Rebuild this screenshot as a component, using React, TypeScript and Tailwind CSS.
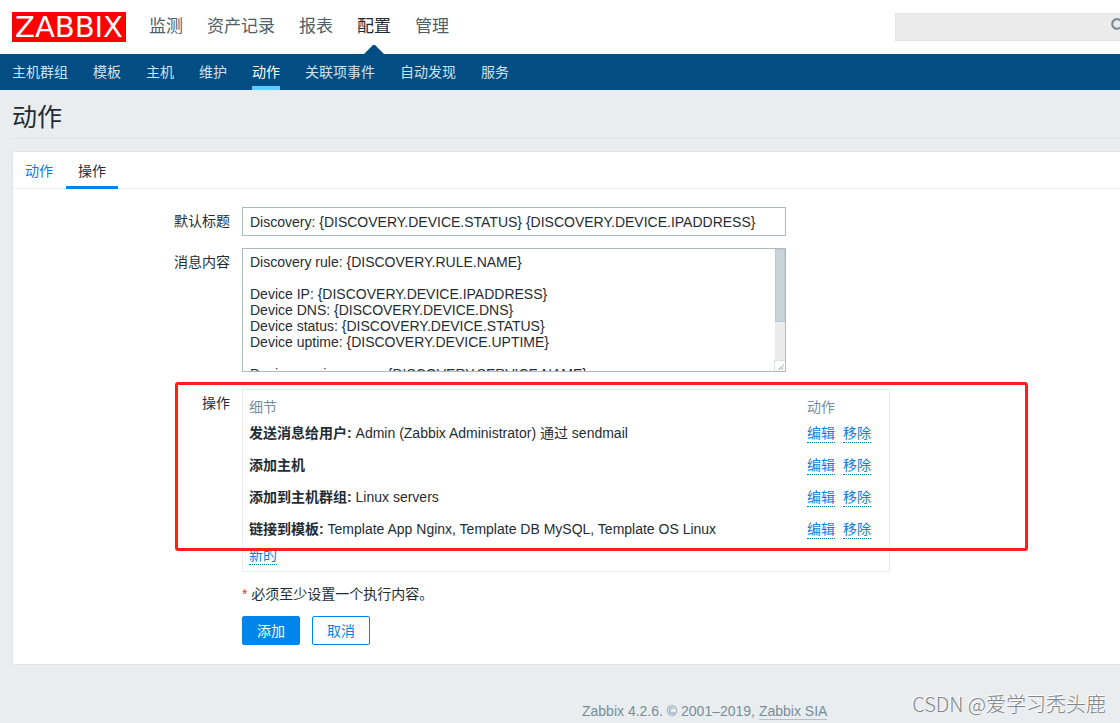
import React from "react";

const mainMenu = ["监测", "资产记录", "报表", "配置", "管理"];
const subMenu = ["主机群组", "模板", "主机", "维护", "动作", "关联项事件", "自动发现", "服务"];

const operations = [
  { title: "发送消息给用户:", detail: "Admin (Zabbix Administrator) 通过 sendmail" },
  { title: "添加主机", detail: "" },
  { title: "添加到主机群组:", detail: "Linux servers" },
  { title: "链接到模板:", detail: "Template App Nginx, Template DB MySQL, Template OS Linux" },
];

const message = `Discovery rule: {DISCOVERY.RULE.NAME}

Device IP: {DISCOVERY.DEVICE.IPADDRESS}
Device DNS: {DISCOVERY.DEVICE.DNS}
Device status: {DISCOVERY.DEVICE.STATUS}
Device uptime: {DISCOVERY.DEVICE.UPTIME}

Device service name: {DISCOVERY.SERVICE.NAME}
Device service port: {DISCOVERY.SERVICE.PORT}
Device service status: {DISCOVERY.SERVICE.STATUS}
Device service uptime: {DISCOVERY.SERVICE.UPTIME}`;

function LinkButton({ children }: { children: React.ReactNode }) {
  return (
    <button type="button" className="block h-[19px] border-b border-dotted border-[#0275b8] leading-[18px] text-[#0a80e4]">
      {children}
    </button>
  );
}

function Header() {
  return (
    <header>
      <div className="flex h-[54px] items-center overflow-hidden bg-white pl-3">
        <a href="#home" className="flex h-[30px] w-[114px] shrink-0 items-center justify-center bg-[#ff0000] font-['DejaVu_Sans',sans-serif] text-[29px] leading-none text-white">
          ZABBIX
        </a>
        <nav className="ml-[23px] flex h-full gap-6">
          {mainMenu.map((item) => (
            <a
              key={item}
              href="#menu"
              className={
                item === "配置"
                  ? "relative flex items-center whitespace-nowrap text-[17px] text-[#1f2c33]"
                  : "flex items-center whitespace-nowrap text-[17px] text-[#4f6068]"
              }
            >
              {item}
              {item === "配置" && (
                <svg className="absolute bottom-0 left-1/2 -translate-x-1/2" width="20" height="9" viewBox="0 0 20 9">
                  <path d="M0 9 9 0h2l9 9z" fill="#024e84" />
                </svg>
              )}
            </a>
          ))}
        </nav>
        <form className="relative -mr-3 ml-auto w-[237px] shrink-0">
          <input aria-label="搜索" className="block h-7 w-full border border-[#e2e4e5] bg-[#ebebeb] px-2 text-sm outline-none" />
          <button type="button" aria-label="搜索" className="absolute top-1 right-0.5">
            <svg width="20" height="18" viewBox="0 0 20 18" fill="none" stroke="#768d99" strokeWidth="2.2">
              <circle cx="7" cy="7" r="4.8" />
              <path d="m10.500 10.500 5 5" />
            </svg>
          </button>
        </form>
      </div>
      <nav className="flex h-9 gap-[25px] bg-[#024e84] pl-3">
        {subMenu.map((item) => (
          <a
            key={item}
            href="#submenu"
            className={
              item === "动作"
                ? "flex items-center border-b-4 border-[#5fcbff] pt-1 text-sm whitespace-nowrap text-white"
                : "flex items-center text-sm whitespace-nowrap text-[#d0e2ee]"
            }
          >
            {item}
          </a>
        ))}
      </nav>
    </header>
  );
}

function MessageField() {
  return (
    <div className="relative w-[544px]">
      <textarea
        id="message"
        defaultValue={message}
        className="block h-[124px] w-full resize-none border border-[#acbbc2] py-[5px] pr-5 pl-[7px] leading-4 outline-none [scrollbar-width:none]"
      />
      <div className="pointer-events-none absolute top-px right-px bottom-px flex w-[11px] flex-col items-end">
        <div className="w-[10px] grow bg-[#ebebeb]">
          <div className="h-[73px] border border-[#b9cad2] bg-[#c8d4da]" />
        </div>
        <svg className="block border-t border-l border-[#d9dcde] bg-white" width="11" height="11" viewBox="0 0 10 10" fill="none" stroke="#555555" strokeDasharray="1 0.4">
          <path d="M4 8.500 8.500 4M6.500 8.500l2-2" />
        </svg>
      </div>
    </div>
  );
}

function OperationsTable() {
  return (
    <div className="w-[648px] border border-[#e9edef] px-[6px] pt-[7px] pb-[6px]">
      <table className="w-full table-fixed border-collapse text-left">
        <colgroup>
          <col />
          <col className="w-[76px]" />
        </colgroup>
        <thead>
          <tr className="h-5 text-[#768d99]">
            <th className="p-0 font-normal">细节</th>
            <th className="p-0 font-normal">动作</th>
          </tr>
        </thead>
        <tbody>
          {operations.map((op) => (
            <tr key={op.title} className="h-8">
              <td className="p-0">
                <b>{op.title}</b> {op.detail}
              </td>
              <td className="p-0">
                <div className="flex gap-2">
                  <LinkButton>编辑</LinkButton>
                  <LinkButton>移除</LinkButton>
                </div>
              </td>
            </tr>
          ))}
          <tr className="h-5">
            <td className="p-0">
              <LinkButton>新的</LinkButton>
            </td>
            <td className="p-0" />
          </tr>
        </tbody>
      </table>
    </div>
  );
}

export default function App() {
  return (
    <div className="relative flex min-h-screen flex-col overflow-hidden bg-[#e9edf0] font-['Liberation_Sans','Noto_Sans_CJK_SC',sans-serif] text-sm leading-5 text-[#1f2c33]">
      <Header />
      <main className="pl-3">
        <h1 className="flex h-[49px] items-center border-b border-[#dfe4e7] pt-1.5 text-[25px]">动作</h1>
        <section className="mt-3 border-t border-b border-l border-[#dfe4e7] bg-white">
          <div role="tablist" className="flex h-[37px] gap-px border-b border-[#ebeef0]">
            <button type="button" role="tab" aria-selected="false" className="px-3 pt-0.5 text-[#0a80e4]">
              动作
            </button>
            <button type="button" role="tab" aria-selected="true" className="-mb-px border-b-[3px] border-[#0086ea] px-3 pt-1">
              操作
            </button>
          </div>
          <form className="flex flex-col pt-[18px] pb-[19px]">
            <div className="flex gap-3">
              <label htmlFor="subject" className="w-[217px] shrink-0 pt-1 text-right">
                默认标题
              </label>
              <input
                id="subject"
                defaultValue="Discovery: {DISCOVERY.DEVICE.STATUS} {DISCOVERY.DEVICE.IPADDRESS}"
                className="h-[29px] w-[544px] border border-[#acbbc2] px-[7px] outline-none"
              />
            </div>
            <div className="mt-3 flex gap-3">
              <label htmlFor="message" className="w-[217px] shrink-0 pt-1 text-right">
                消息内容
              </label>
              <MessageField />
            </div>
            <div className="relative mt-[17px] flex gap-3">
              <div className="w-[217px] shrink-0 pt-1 text-right">操作</div>
              <OperationsTable />
              <div className="pointer-events-none absolute -top-[7px] left-[162px] h-[169px] w-[853px] rounded-[3px] border-[3px] border-[#ff2015]" />
            </div>
            <div className="mt-3 pl-[229px]">
              <p>
                <span className="text-[#e33734]">*</span> 必须至少设置一个执行内容。
              </p>
              <div className="mt-3 flex gap-3">
                <button type="button" className="h-[29px] rounded-[2px] border border-[#0086ea] bg-[#0086ea] px-[14px] text-white">
                  添加
                </button>
                <button type="button" className="h-[29px] rounded-[2px] border border-[#0086ea] bg-white px-[14px] text-[#0a80e4]">
                  取消
                </button>
              </div>
            </div>
          </form>
        </section>
      </main>
      <footer className="mt-9 pl-[582px] text-[#768d99]">
        Zabbix 4.2.6. © 2001–2019,{" "}
        <a href="#zabbix" className="border-b border-[#b4c0c7]">
          Zabbix SIA
        </a>
      </footer>
      <div className="absolute right-[14px] bottom-[5px] font-['Noto_Sans_CJK_SC',sans-serif] text-[20px] leading-7 font-light text-[#858585] [text-shadow:-1px_-1px_0_#ffffff]">
        CSDN @爱学习秃头鹿
      </div>
    </div>
  );
}
